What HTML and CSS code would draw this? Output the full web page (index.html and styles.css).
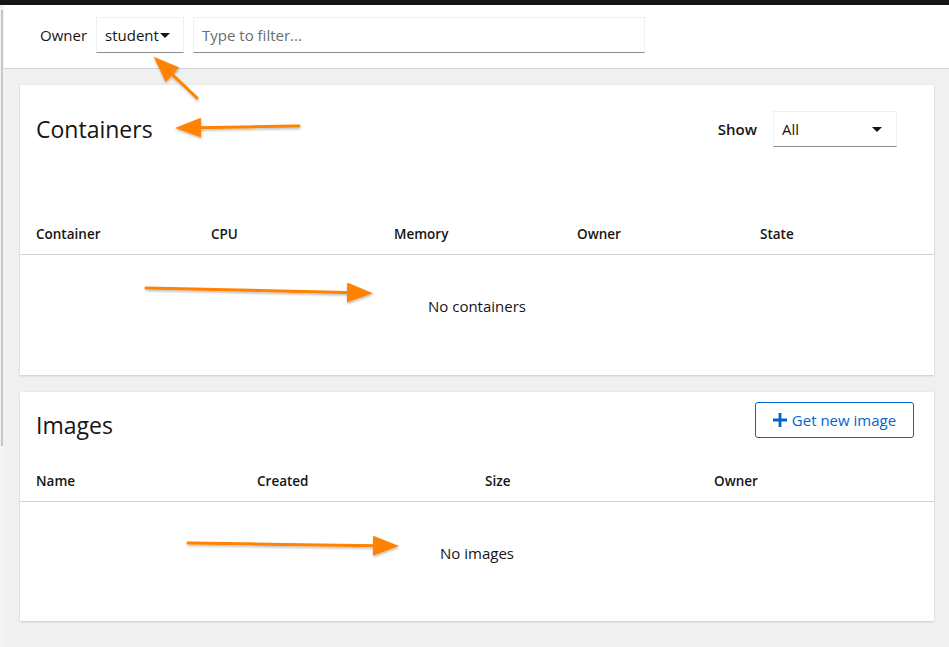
FILE: index.html
```html
<!DOCTYPE html>
<html lang="en">
<head>
<meta charset="utf-8">
<title>Podman containers</title>
<link rel="stylesheet" href="styles.css">
</head>
<body>
<div class="topbar"></div>
<div class="frame">
  <div class="edge"><div class="edge-line"></div></div>
  <div class="app">
    <div class="toolbar">
      <span class="toolbar-label">Owner</span>
      <div class="select owner-select">student<span class="caret"></span></div>
      <div class="filter">Type to filter...</div>
    </div>
    <div class="content">
      <section class="card">
        <div class="card-header">
          <h2 class="card-title">Containers</h2>
          <div class="show">
            <span class="show-label">Show</span>
            <div class="select show-select"><span>All</span><span class="caret"></span></div>
          </div>
        </div>
        <div class="thead cols-containers">
          <div>Container</div><div>CPU</div><div>Memory</div><div>Owner</div><div>State</div>
        </div>
        <div class="empty">No containers</div>
      </section>
      <section class="card">
        <div class="card-header images-header">
          <h2 class="card-title">Images</h2>
          <button class="btn-secondary" type="button">
            <svg class="plus" viewBox="0 0 14 14" width="14" height="14" aria-hidden="true"><path d="M5.6 0h2.8v5.6H14v2.8H8.4V14H5.6V8.4H0V5.6h5.6z" fill="#0066cc"/></svg>
            Get new image
          </button>
        </div>
        <div class="thead cols-images images-thead">
          <div>Name</div><div>Created</div><div>Size</div><div>Owner</div>
        </div>
        <div class="empty images-empty">No images</div>
      </section>
    </div>
  </div>
</div>
<svg class="annotations" width="949" height="647" viewBox="0 0 949 647" aria-hidden="true">
  <defs>
    <marker id="head" markerUnits="userSpaceOnUse" markerWidth="28" markerHeight="22" refX="20" refY="10" orient="auto">
      <path d="M0,0 L26,10 L0,20 z" fill="#ff8200"/>
    </marker>
    <filter id="sh" x="-20%" y="-50%" width="140%" height="200%">
      <feDropShadow dx="0.5" dy="1.5" stdDeviation="1.2" flood-color="#000" flood-opacity="0.28"/>
    </filter>
  </defs>
  <g filter="url(#sh)" stroke="#ff8200" stroke-width="3" fill="none" stroke-linecap="round">
    <line x1="197" y1="98" x2="158" y2="61" marker-end="url(#head)"/>
    <line x1="299" y1="126" x2="181" y2="128" marker-end="url(#head)"/>
    <line x1="146" y1="288" x2="367" y2="293" marker-end="url(#head)"/>
    <line x1="188" y1="543" x2="393" y2="546" marker-end="url(#head)"/>
  </g>
</svg>
</body>
</html>
```
FILE: styles.css
```css
* { box-sizing: border-box; }
html, body { margin: 0; padding: 0; }
body {
  width: 949px;
  height: 647px;
  overflow: hidden;
  background: #f0f0f0;
  font-family: "Open Sans", "Liberation Sans", sans-serif;
  color: #151515;
  position: relative;
}
.topbar { height: 5px; background: #151515; }
.frame { display: flex; height: 642px; }
.edge {
  width: 4px;
  flex: none;
  background: #f3f3f3;
  padding-top: 5px;
  padding-left: 1px;
}
.edge-line { width: 2px; height: 436px; background: #c6c6c6; }
.app { flex: 1; display: flex; flex-direction: column; }
.toolbar {
  height: 64px;
  background: #fff;
  border-bottom: 1px solid #d2d2d2;
  display: flex;
  align-items: flex-start;
  padding: 12px 0 0 36px;
  gap: 9px;
}
.toolbar-label { font-size: 15px; line-height: 36px; }
.select {
  height: 36px;
  border: 1px solid #f0f0f0;
  border-bottom-color: #8a8d90;
  background: #fff;
  font-size: 15px;
  line-height: 34px;
  display: flex;
  align-items: center;
}
.caret {
  width: 0; height: 0;
  border-left: 5px solid transparent;
  border-right: 5px solid transparent;
  border-top: 5px solid #151515;
}
.owner-select { width: 88px; padding: 0 8px; gap: 1px; }
.filter {
  width: 452px;
  height: 36px;
  border: 1px solid #f0f0f0;
  border-bottom-color: #8a8d90;
  font-size: 15px;
  line-height: 34px;
  padding-left: 8px;
  color: #6a6e73;
}
.content {
  flex: 1;
  padding: 16px 15px 0 16px;
  display: flex;
  flex-direction: column;
  gap: 17px;
}
.card {
  background: #fff;
  box-shadow: 0 1px 2px rgba(3,3,3,0.14), 0 0 2px rgba(3,3,3,0.06);
}
.card-header {
  display: flex;
  justify-content: space-between;
  align-items: center;
  padding: 25px 37px 0 16px;
}
.card-title { margin: 0; font-size: 23px; font-weight: 400; line-height: 36px; }
.show { display: flex; align-items: center; gap: 16px; }
.show-label { font-size: 15px; font-weight: 600; }
.show-select { width: 124px; padding: 0 14px 0 8px; justify-content: space-between; margin-top: 1px; }
.thead {
  display: grid;
  height: 41px;
  align-items: center;
  border-bottom: 1px solid #d2d2d2;
  font-size: 13.5px;
  font-weight: 600;
  padding-left: 16px;
  margin-top: 67px;
}
.cols-containers { grid-template-columns: 175px 183px 183px 183px 1fr; }
.cols-images { grid-template-columns: 221px 228px 229px 1fr; }
.images-header { align-items: flex-start; padding: 10px 20px 0 16px; }
.images-header .card-title { margin-top: 5px; }
.images-thead { margin-top: 18px; }
.empty {
  text-align: center;
  font-size: 15px;
  line-height: 24px;
  padding: 39px 0 57px;
}
.images-empty { padding-bottom: 56px; }
.btn-secondary {
  height: 36px;
  width: 159px;
  border: 1px solid #0066cc;
  border-radius: 3px;
  background: #fff;
  color: #0066cc;
  font-family: inherit;
  font-size: 15px;
  display: flex;
  align-items: center;
  justify-content: center;
  gap: 5px;
  padding: 0;
}
.annotations { position: absolute; left: 0; top: 0; pointer-events: none; }
```
